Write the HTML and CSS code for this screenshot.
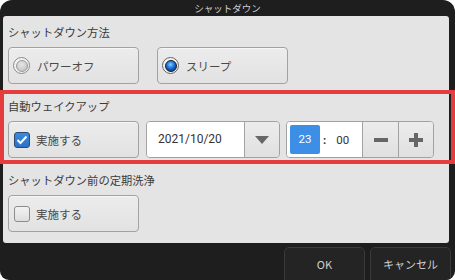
FILE: index.html
```html
<!DOCTYPE html>
<html lang="ja">

<head>
    <meta charset="UTF-8">
    <meta name="viewport" content="width=device-width, initial-scale=1.0">
    <title>シャットダウン</title>
    <link rel="stylesheet" href="styles.css">
</head>

<body>
    <div class="window">
        <div class="title">シャットダウン</div>

        <div class="panel">
            <!-- シャットダウン方法 -->
            <div class="section first">
                <p class="label">シャットダウン方法</p>
                <div class="row">
                    <div class="opt_btn">
                        <span class="radio"></span>
                        <span>パワーオフ</span>
                    </div>
                    <div class="opt_btn wide_gap">
                        <span class="radio on"></span>
                        <span>スリープ</span>
                    </div>
                </div>
            </div>

            <!-- 自動ウェイクアップ -->
            <div class="section">
                <p class="label">自動ウェイクアップ</p>
                <div class="row">
                    <div class="opt_btn">
                        <span class="check on">
                            <svg width="12" height="10" viewBox="0 0 12 10">
                                <path d="M1.5 5 L4.5 8 L10.5 1.5" fill="none" stroke="#fff" stroke-width="2" />
                            </svg>
                        </span>
                        <span>実施する</span>
                    </div>
                    <div class="date_box">
                        <div class="date_text">2021/10/20</div>
                        <div class="drop"><span class="tri"></span></div>
                    </div>
                    <div class="time_box">
                        <div class="time_text">
                            <span class="hour">23</span>
                            <span class="colon">:</span>
                            <span class="min">00</span>
                        </div>
                        <div class="step"><span class="minus"></span></div>
                        <div class="step plus_btn"><span class="minus"></span><span class="vbar"></span></div>
                    </div>
                </div>
            </div>

            <!-- 定期洗浄 -->
            <div class="section">
                <p class="label">シャットダウン前の定期洗浄</p>
                <div class="row">
                    <div class="opt_btn">
                        <span class="check"></span>
                        <span>実施する</span>
                    </div>
                </div>
            </div>
        </div>

        <div class="footer">
            <button type="button" class="foot_btn">OK</button>
            <button type="button" class="foot_btn">キャンセル</button>
        </div>

        <div class="highlight"></div>
    </div>
</body>

</html>
```

FILE: styles.css
```css
body {
    margin: 0;
    background-color: #fff;
    font-family: "Noto Sans CJK JP", "Noto Sans", sans-serif;
}

.window {
    position: relative;
    width: 455px;
    height: 280px;
    background-color: #1e1e1e;
    border-radius: 12px 12px 9px 9px;
    overflow: hidden;
}

.title {
    height: 16px;
    line-height: 16px;
    text-align: center;
    font-size: 9.5px;
    color: #d0d0d0;
}

.panel {
    margin-left: 3px;
    margin-right: 6px;
    height: 227px;
    background-color: #e4e4e4;
    border-radius: 3px;
    padding-left: 5px;
    box-sizing: border-box;
    overflow: hidden;
}

.section {
    padding-top: 13px;
}

.section.first {
    padding-top: 7px;
}

.label {
    margin: 0;
    height: 18px;
    line-height: 18px;
    font-size: 11.3px;
    color: #3a3a3a;
}

.row {
    display: flex;
    margin-top: 6px;
    height: 37px;
}

.opt_btn {
    display: flex;
    align-items: center;
    width: 131px;
    height: 37px;
    box-sizing: border-box;
    border: 1px solid #a2a2a2;
    border-radius: 4px;
    background: linear-gradient(#ececec, #e2e2e2);
    box-shadow: inset 0 1px 0 #f6f6f6;
    font-size: 11.5px;
    color: #4a4a4a;
}

.wide_gap {
    margin-left: 18px;
}

.radio {
    display: inline-flex;
    align-items: center;
    justify-content: center;
    width: 17px;
    height: 17px;
    margin-left: 4px;
    margin-right: 7px;
    box-sizing: border-box;
    border-radius: 50%;
    border: 1px solid #8a8a8a;
    background-color: #f2f2f2;
}

.radio::after {
    content: "";
    width: 12px;
    height: 12px;
    box-sizing: border-box;
    border-radius: 50%;
    border: 1px solid #9a9a9a;
    background: radial-gradient(circle at 45% 35%, #e6e6e6, #bcbcbc);
}

.radio.on {
    border-color: #666;
}

.radio.on::after {
    border-color: #1a1a1a;
    background: radial-gradient(circle at 45% 35%, #8ccaff 0, #2a84e8 3px, #0a4ea8 5.5px);
}

.check {
    display: inline-flex;
    align-items: center;
    justify-content: center;
    width: 16px;
    height: 16px;
    margin-left: 5px;
    margin-right: 6px;
    box-sizing: border-box;
    border: 1px solid #8c8c8c;
    border-radius: 3px;
    background: linear-gradient(#f2f2f2, #dedede);
}

.check.on {
    border-color: #2a4a70;
    background: linear-gradient(#3a8ae0, #2a72c8);
}

.date_box {
    display: flex;
    margin-left: 7px;
    width: 134px;
    height: 37px;
    box-sizing: border-box;
    border: 1px solid #a2a2a2;
    border-radius: 4px;
    overflow: hidden;
}

.date_text {
    width: 98px;
    background-color: #fff;
    border-right: 1px solid #a2a2a2;
    line-height: 35px;
    padding-left: 11px;
    box-sizing: border-box;
    font-family: Roboto, "Noto Sans", sans-serif;
    font-size: 12px;
    color: #333;
}

.drop {
    flex: 1;
    display: flex;
    align-items: center;
    justify-content: center;
    background: linear-gradient(#ececec, #e0e0e0);
}

.tri {
    width: 0;
    height: 0;
    border-left: 7px solid transparent;
    border-right: 7px solid transparent;
    border-top: 8px solid #666;
}

.time_box {
    display: flex;
    margin-left: 6px;
    width: 148px;
    height: 37px;
    box-sizing: border-box;
    border: 1px solid #a2a2a2;
    border-radius: 4px;
    overflow: hidden;
}

.time_text {
    display: flex;
    align-items: center;
    width: 76px;
    padding-left: 3px;
    box-sizing: border-box;
    background-color: #fff;
    border-right: 1px solid #a2a2a2;
    font-family: Roboto, "Noto Sans", sans-serif;
    font-size: 11.5px;
    color: #333;
}

.hour {
    width: 30px;
    height: 29px;
    line-height: 29px;
    text-align: center;
    background-color: #3d8ee6;
    border-radius: 2px;
    color: #fff;
}

.colon {
    margin-left: 3px;
    font-weight: bold;
}

.min {
    margin-left: 10px;
}

.step {
    position: relative;
    width: 35px;
    display: flex;
    align-items: center;
    justify-content: center;
    background: linear-gradient(#ececec, #e0e0e0);
    border-right: 1px solid #a2a2a2;
}

.plus_btn {
    flex: 1;
    border-right: none;
}

.minus {
    width: 14px;
    height: 4px;
    background-color: #666;
}

.vbar {
    position: absolute;
    width: 4px;
    height: 14px;
    background-color: #666;
}

.footer {
    display: flex;
    justify-content: flex-end;
    gap: 5px;
    padding-top: 4px;
    padding-right: 4px;
}

.foot_btn {
    width: 81px;
    height: 40px;
    padding: 0;
    padding-bottom: 6px;
    background-color: #242424;
    border: 1px solid #3a3a3a;
    border-radius: 5px 5px 0 0;
    color: #cfcfcf;
    font-family: "Noto Sans CJK JP", "Noto Sans", sans-serif;
    font-size: 11px;
}

.highlight {
    position: absolute;
    left: 0;
    top: 90px;
    width: 455px;
    height: 74px;
    box-sizing: border-box;
    border: 4px solid #e53d3d;
}
```
